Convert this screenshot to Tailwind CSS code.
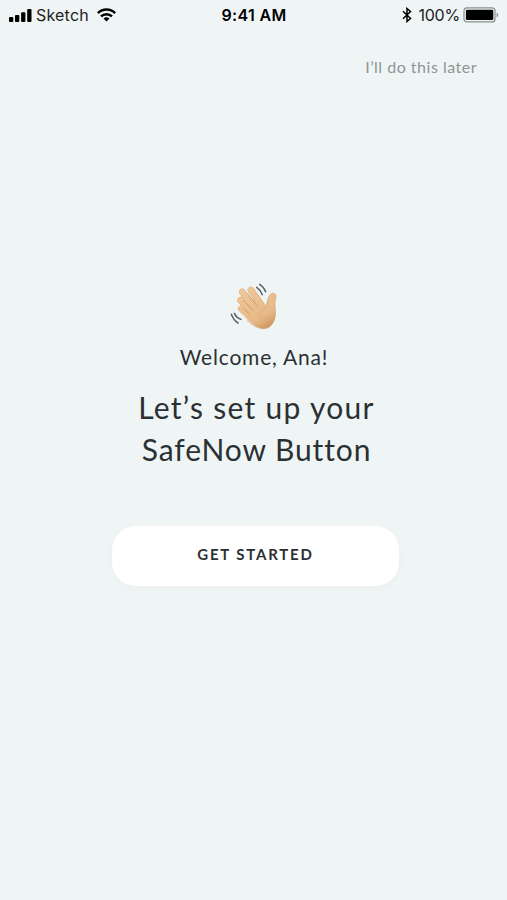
<!DOCTYPE html>
<html lang="en">
<head>
    <meta charset="UTF-8">
    <meta name="viewport" content="width=device-width, initial-scale=1.0">
    <script src="https://cdn.jsdelivr.net/npm/@tailwindcss/browser@4"></script>
    <title>SafeNow</title>
</head>
<body class="bg-[#eff5f5]">
    <div class="flex flex-col h-[900px] w-[507px] overflow-hidden bg-[#eff5f5] font-[Lato,sans-serif] text-[#2b3033]">

        <!-- status bar -->
        <header class="grid grid-cols-3 items-center h-[30px] pl-[9px] pr-[8px] font-[Inter,sans-serif] text-black">
            <div class="flex items-center">
                <svg class="w-[23px] h-[13px]" viewBox="0 0 23 13">
                    <rect x="0" y="8" width="4.3" height="5" rx="1"/>
                    <rect x="6" y="6" width="4.3" height="7" rx="1"/>
                    <rect x="12.1" y="3.3" width="4.3" height="9.7" rx="1"/>
                    <rect x="18.2" y="0" width="4.3" height="13" rx="1"/>
                </svg>
                <span class="ml-[4px] text-[16px] tracking-[0.2px] leading-none text-[#222]">Sketch</span>
                <svg class="ml-[8px] mb-[1px] w-[19px] h-[14px]" viewBox="0 0 19 14" fill="none" stroke="#000" stroke-width="2.5">
                    <path d="M.9 5.1a12.3 12.3 0 0 1 17.2 0"/>
                    <path d="M4 8.4a7.9 7.9 0 0 1 11 0"/>
                    <path d="M9.5 13.6 6.5 10.6a4.3 4.3 0 0 1 6 0z" fill="#000" stroke="none"/>
                </svg>
            </div>
            <div class="text-center text-[16px] font-semibold leading-none tracking-[0.35px] whitespace-nowrap">9:41 AM</div>
            <div class="flex items-center justify-end">
                <svg class="w-[10px] h-[16px]" viewBox="0 0 10 16" fill="none" stroke="#000" stroke-width="1.5">
                    <path d="M1 4.3 8.5 11.5 5 14.500V1.500l3.500 3L1 11.7"/>
                </svg>
                <span class="ml-[6px] text-[16px] leading-none tracking-[-0.2px] text-[#222]">100%</span>
                <svg class="ml-[3px] w-[36px] h-[16px]" viewBox="0 0 36 16">
                    <rect x="1" y=".9" width="31" height="14" rx="3" fill="none" stroke="#8b8f90" stroke-width="1.2"/>
                    <rect x="2.9" y="2.8" width="27.4" height="10.2" rx="1.2"/>
                    <path d="M33.6 5.5c2.2.8 2.2 4.2 0 5z" fill="#8b8f90"/>
                </svg>
            </div>
        </header>

        <div class="flex justify-end pt-[26px] pr-[30px]">
            <a href="#" class="text-[16px] leading-[22px] tracking-[0.5px] text-[#8d9595]">I’ll do this later</a>
        </div>

        <main class="flex flex-col items-center pt-[196px]">
            <!-- waving hand -->
            <svg class="w-[64px] h-[64px]" viewBox="0 0 192 192" fill="none" stroke-linecap="round" stroke-linejoin="round">
                <defs>
                    <linearGradient id="skin" gradientUnits="userSpaceOnUse" x1="60" y1="50" x2="135" y2="168">
                        <stop offset="0" stop-color="#efc79a"/>
                        <stop offset=".7" stop-color="#e8b988"/>
                        <stop offset="1" stop-color="#cc935c"/>
                    </linearGradient>
                </defs>
                <g stroke="#d3a26d" stroke-width="20">
                    <path d="M87 48 120 96M61 54 102 108M56 79 98 125M58 104 94 138"/>
                </g>
                <g stroke="url(#skin)" stroke-width="18">
                    <path d="M87 48 120 96M61 54 102 108M56 79 98 125M58 104 94 138"/>
                </g>
                <path d="M91 74 118 99C128 103 134 96 136 84C138 71 143 59 153 58C162 58 164 67 160 76C156 90 162 105 160 123C158 145 146 163 126 164C106 165 85 148 66 125L78 96Z" fill="url(#skin)"/>
                <path d="M130 97C134 95 135 90 136 84C138 71 143 59 153 58C162 58 164 67 160 76C156 90 162 105 160 123C158 145 146 163 126 164C108 165 94 155 76 140" stroke="#cf9c66" stroke-width="1.8"/>
                <path d="M79 62 106 97M65 79 94 111M63 102 84 122" stroke="#c58f58" stroke-width="2.2"/>
                <path d="M136 86C133 101 126 106 116 115C110 122 111 130 117 138" stroke="#d9a974" stroke-width="2"/>
                <g stroke="#566066" stroke-width="4.5">
                    <path d="M113 31Q125 38 131 53M104 40Q115 47 121 62"/>
                    <path d="M37 118Q43 131 57 136M28 121Q34 138 48 147"/>
                </g>
            </svg>
            <p class="mt-[5px] ml-[1px] text-[21px] leading-[28px] tracking-[0.8px]">Welcome, Ana!</p>
            <h1 class="mt-[15px] pl-[6px] flex flex-col items-center text-[30px] leading-[42px]">
                <span class="tracking-[1.3px]">Let’s set up your</span>
                <span class="tracking-[0.9px]">SafeNow Button</span>
            </h1>
            <button class="mt-[56px] ml-[4px] w-[287px] h-[60px] pb-[4px] rounded-[24px] bg-white shadow-[0_3px_8px_rgba(90,80,70,0.025)] text-[15px] font-bold tracking-[1.8px]">GET STARTED</button>
        </main>
    </div>
</body>
</html>
